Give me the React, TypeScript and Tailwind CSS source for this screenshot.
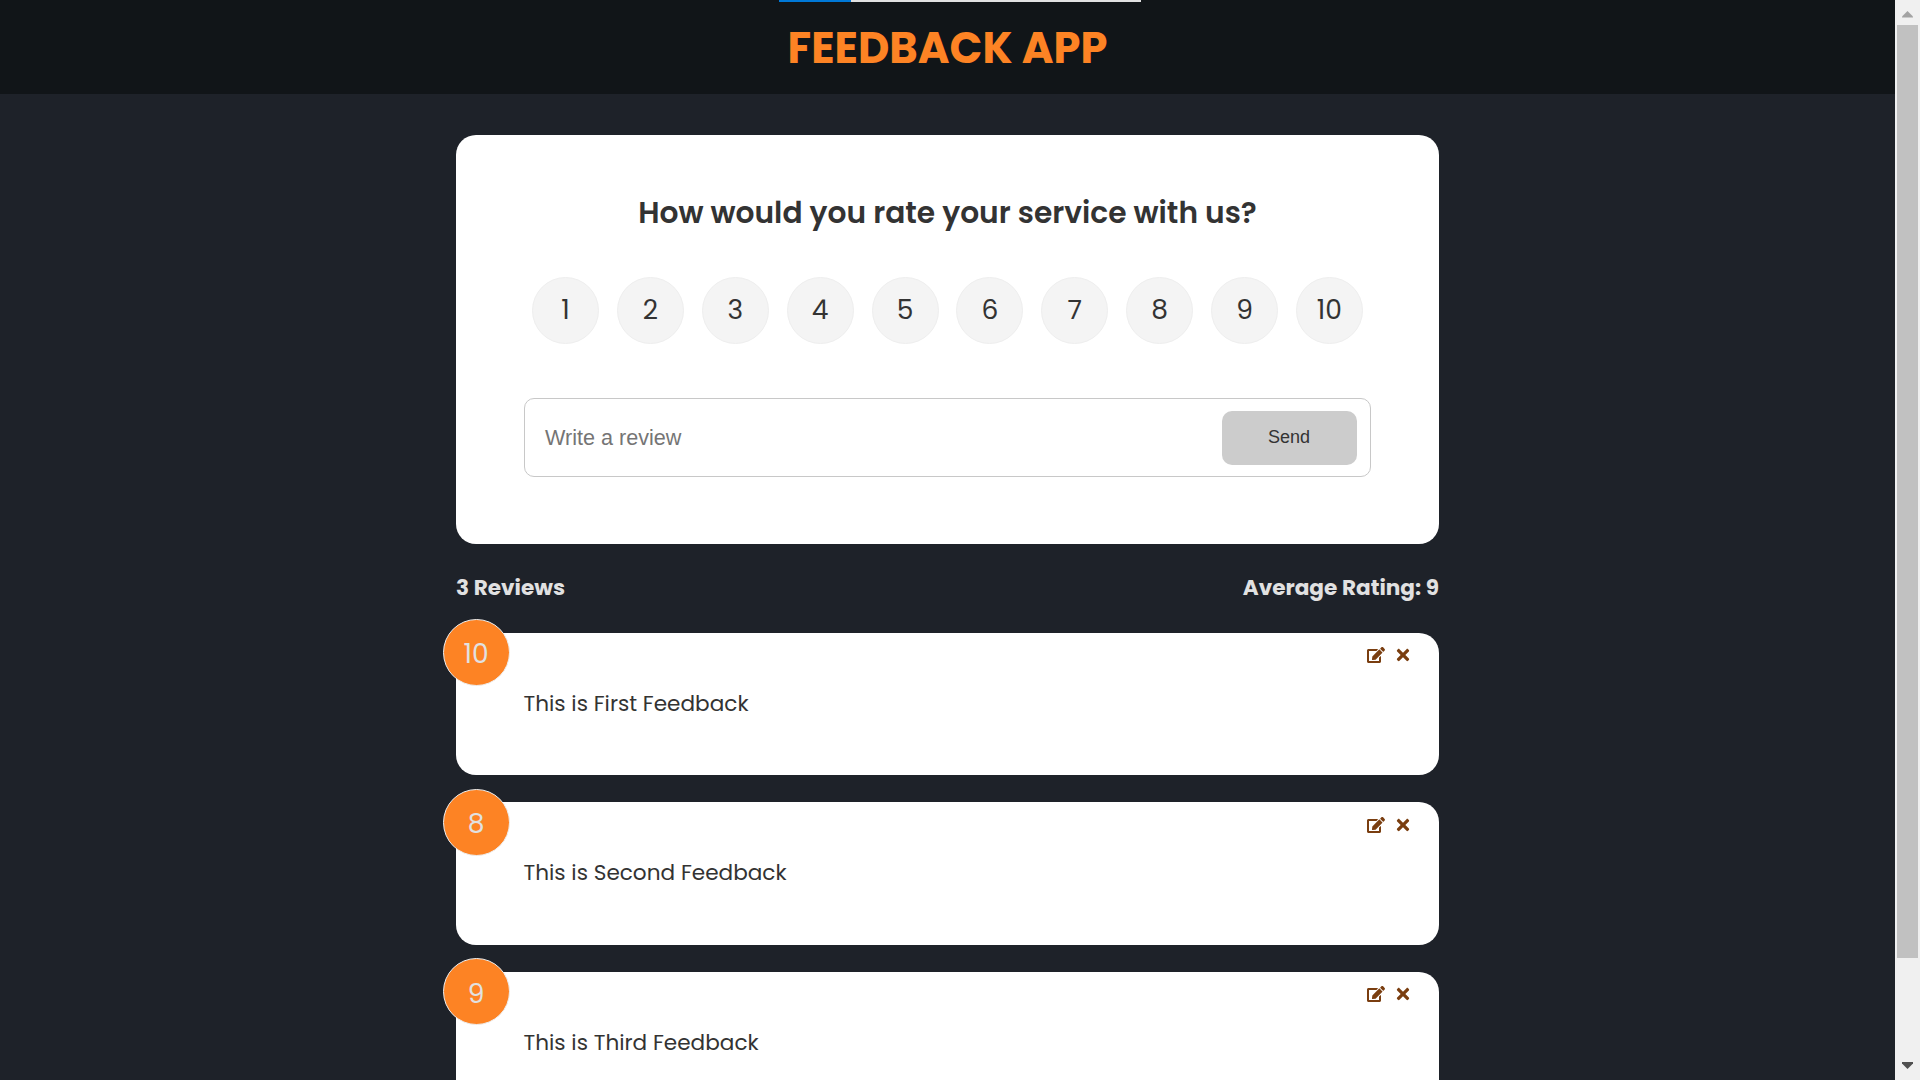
import { FaEdit, FaTimes } from "react-icons/fa";

const ratings = [1, 2, 3, 4, 5, 6, 7, 8, 9, 10];
const reviews = [
  { rating: 10, text: "This is First Feedback" },
  { rating: 8, text: "This is Second Feedback" },
  { rating: 9, text: "This is Third Feedback" },
];

function Header() {
  return (
    <header className="relative flex h-[94px] items-center justify-center bg-[#111518] pt-px">
      <div className="absolute top-0 left-[779px] flex h-[2px] w-[362px] bg-[#e1e1e1]">
        <div className="w-[72px] bg-[#0078d7]" />
      </div>
      <h1 className="text-[43.2px] leading-[64px] font-bold text-[#fd8324]">FEEDBACK APP</h1>
    </header>
  );
}

function FeedbackForm() {
  return (
    <section className="h-[409px] rounded-[20px] bg-white px-[68px] pt-[54px]">
      <h2 className="text-center text-[29.7px] leading-[48px] font-semibold">How would you rate your service with us?</h2>
      <ul className="mt-[40px] flex justify-between px-[8px]">
        {ratings.map((n) => (
          <li
            key={n}
            className="flex size-[67px] items-center justify-center rounded-full border border-[#eeeeee] bg-[#f4f4f4] pb-px text-[26.5px]"
          >
            {n}
          </li>
        ))}
      </ul>
      <form className="mt-[54px] flex h-[79px] items-center justify-between rounded-[10px] border border-[#c8c8c8] pr-[13px] pl-[20px] font-['Liberation_Sans',sans-serif]">
        <span className="pt-[2px] text-[21.6px] text-[#757575]">Write a review</span>
        <button type="button" className="h-[54px] w-[135px] rounded-[10px] bg-[#cccccc] pr-px text-[18px]">
          Send
        </button>
      </form>
    </section>
  );
}

function ReviewCard({ rating, text }: { rating: number; text: string }) {
  return (
    <article className="relative h-[142.6px] shrink-0 rounded-[20px] bg-white px-[67.5px] pt-[54px]">
      <div className="absolute -top-[13.6px] -left-[13.5px] flex size-[67px] items-center justify-center rounded-full border border-[#eeeeee] bg-[#fd8324] pt-[3px] text-[26.5px] text-[#e1e1e1]">
        {rating}
      </div>
      <div className="absolute top-[13.3px] right-[27px] flex items-center gap-[9px] text-[18px] text-[#7a3e10]">
        <FaEdit />
        <FaTimes />
      </div>
      <p className="text-[21.6px] leading-[33px]">{text}</p>
    </article>
  );
}

function Scrollbar() {
  return (
    <div className="flex h-full w-[25px] flex-col items-center bg-[#f0f0f0]">
      <svg className="h-[25px] w-[25px] shrink-0" viewBox="0 0 25 25">
        <path d="M7 17.500h11v-1L12.500 11L7 16.500z" fill="#a3a3a3" />
      </svg>
      <div className="h-[933px] w-[21px] bg-[#c1c1c1]" />
      <svg className="mt-auto h-[25px] w-[25px] shrink-0" viewBox="0 0 25 25">
        <path d="M7 7h11v1.500L12.500 14L7 8.500z" fill="#505050" />
      </svg>
    </div>
  );
}

export default function App() {
  return (
    <div className="flex h-[1080px] w-[1920px] overflow-hidden bg-[#1e2229] font-[Poppins,Inter,sans-serif] text-[#333333]">
      <div className="h-full w-[1895px]">
        <Header />
        <main className="mx-auto mt-[41px] w-[983px]">
          <FeedbackForm />
          <div className="mt-[28px] flex h-[32px] items-center justify-between text-[21.6px] font-bold text-[#e1e1e1]">
            <p>3 Reviews</p>
            <p>Average Rating: 9</p>
          </div>
          <div className="mt-[28.8px] flex flex-col gap-[27px]">
            {reviews.map((r) => (
              <ReviewCard key={r.rating} rating={r.rating} text={r.text} />
            ))}
          </div>
        </main>
      </div>
      <Scrollbar />
    </div>
  );
}
